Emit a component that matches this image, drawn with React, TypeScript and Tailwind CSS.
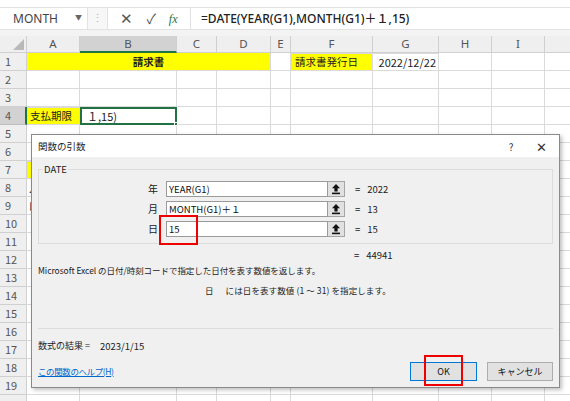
import React from "react";

const colW = ["w-[53px]", "w-[97px]", "w-[40px]", "w-[54px]", "w-[20px]", "w-[82px]", "w-[66px]", "w-[53px]", "w-[53px]", "w-[30px]"];
const colNames = ["A", "B", "C", "D", "E", "F", "G", "H", "I", ""];

function UpIcon() {
  return (
    <svg width="10" height="12" viewBox="0 0 10 12">
      <polygon points="5,1 1,5.2 3.4,5.2 3.4,8.4 6.6,8.4 6.6,5.2 9,5.2" fill="#111" />
      <rect x="1" y="9.6" width="8" height="1.6" fill="#111" />
    </svg>
  );
}

function Cell({ i, children, cls = "" }: { i: number; children?: React.ReactNode; cls?: string }) {
  return (
    <div className={`${colW[i]} h-full shrink-0 border-r border-b border-[#dadada] flex items-center overflow-hidden whitespace-nowrap ${cls}`}>
      {children}
    </div>
  );
}

function RowHdr({ n, sel = false }: { n: number; sel?: boolean }) {
  return (
    <div
      className={`w-[27px] h-full shrink-0 flex items-center pl-[5px] text-[11px] text-[#555] border-r border-b ${
        sel ? "bg-[#d2d2d2] border-r-[#217346] border-r-2 border-b-[#bdbdbd]" : "bg-[#efefef] border-[#d0d0d0]"
      }`}
    >
      {n < 20 ? n : ""}
    </div>
  );
}

function Row({ n, children }: { n: number; children?: React.ReactNode }) {
  return (
    <div className="flex h-[18px]">
      <RowHdr n={n} sel={n === 4} />
      {children}
    </div>
  );
}

function Blank({ from }: { from: number }) {
  return (
    <>
      {colW.slice(from).map((_, k) => (
        <Cell key={k} i={from + k} />
      ))}
    </>
  );
}

function ArgRow({ label, value, result }: { label: string; value: string; result: string }) {
  return (
    <div className="flex items-center h-[16px]">
      <div className="w-[119px] text-right text-[10px] text-[#222] leading-none">{label}</div>
      <div className="ml-[8px] w-[162px] h-[16px] bg-white border border-[#9a9a9a] flex items-center pl-[2px] text-[9.5px] text-[#111]">
        {value}
      </div>
      <div className="w-[17px] h-[16px] bg-[#e1e1e1] border border-[#a5a5a5] border-l-0 flex items-center justify-center">
        <UpIcon />
      </div>
      <div className="ml-[10px] text-[9.5px] text-[#222]">=</div>
      <div className="ml-[7px] text-[9.5px] text-[#222]">{result}</div>
    </div>
  );
}

export default function App() {
  return (
    <div
      className="relative w-[570px] h-[401px] overflow-hidden bg-white text-[#222]"
      style={{ fontFamily: '"Noto Sans", "Noto Sans CJK JP", sans-serif' }}
    >
      {/* formula bar */}
      <div className="h-[7px] bg-white" />
      <div className="flex h-[23px] border-y border-[#e2e2e2]">
        <div className="w-[87px] flex items-center pl-[13px] pr-[5px] bg-white">
          <span className="text-[12px] text-[#444] flex-1">MONTH</span>
          <span className="text-[7px] text-[#666]">▼</span>
        </div>
        <div className="w-[20px] flex items-center justify-center bg-[#f7f7f7] text-[#b0b0b0] text-[11px] border-l border-[#e2e2e2]">⋮</div>
        <div className="w-[84px] flex items-center justify-around px-[6px] bg-white border-x border-[#e2e2e2]">
          <span className="text-[#555] text-[15px] leading-none">✕</span>
          <span className="text-[#555] text-[14px] leading-none">✓</span>
          <span className="text-[#217346] text-[12px] italic leading-none" style={{ fontFamily: '"Liberation Serif", serif' }}>
            fx
          </span>
        </div>
        <div className="flex-1 flex items-center pl-[10px] bg-white text-[12px] font-medium text-[#222] whitespace-nowrap">
          =DATE(YEAR(G1),MONTH(G1)＋１,15)
        </div>
      </div>
      <div className="h-[6px] bg-[#f3f3f3]" />
      {/* column headers */}
      <div className="flex h-[17px] bg-[#efefef] text-[11.5px] text-[#555]">
        <div className="w-[27px] shrink-0 border-r border-b border-[#d0d0d0] relative">
          <svg className="absolute right-[2px] bottom-[2px]" width="11" height="11" viewBox="0 0 11 11">
            <polygon points="11,0 11,11 0,11" fill="#b9b9b9" />
          </svg>
        </div>
        {colNames.map((c, i) => (
          <div
            key={i}
            className={`${colW[i]} shrink-0 flex items-center justify-center border-r border-[#d0d0d0] ${
              i === 1 ? "bg-[#d2d2d2] border-b-2 border-b-[#217346]" : "border-b"
            }`}
          >
            {c}
          </div>
        ))}
      </div>
      {/* rows */}
      <div style={{ fontFamily: '"Noto Sans CJK JP", sans-serif' }} className="text-[10.5px]">
        <Row n={1}>
          <div className="w-[244px] h-full shrink-0 bg-[#ffff00] border-r border-b border-[#dadada] flex items-center justify-center font-bold">
            請求書
          </div>
          <Cell i={4} />
          <Cell i={5} cls="bg-[#ffff00] border border-[#333] pl-[3px]">請求書発行日</Cell>
          <Cell i={6} cls="border border-l-0 border-[#555] justify-end pr-[2px] text-[11px]">2022/12/22</Cell>
          <Blank from={7} />
        </Row>
        <Row n={2}>
          <Blank from={0} />
        </Row>
        <Row n={3}>
          <Blank from={0} />
        </Row>
        <Row n={4}>
          <Cell i={0} cls="bg-[#ffff00] border border-[#333] pl-[2px] text-[10.5px]">支払期限</Cell>
          <div className="w-[97px] h-full shrink-0 border-2 border-[#217346] relative flex items-center pl-[5px] text-[11px]">
            １,15)
            <div className="absolute -right-[3px] -bottom-[3px] w-[4px] h-[4px] bg-[#217346] border border-white" />
          </div>
          <Blank from={2} />
        </Row>
        {[5, 6, 7, 8, 9, 10, 11, 12, 13, 14, 15, 16, 17, 18, 19, 20].map((n) => (
          <Row key={n} n={n}>
            {n === 7 ? (
              <Cell i={0} cls="bg-[#ffff00] border border-[#333]" />
            ) : n === 8 ? (
              <Cell i={0} cls="pl-[2px]">入金</Cell>
            ) : n === 9 ? (
              <Cell i={0} cls="pl-[2px]">口座</Cell>
            ) : (
              <Cell i={0} />
            )}
            <Blank from={1} />
          </Row>
        ))}
      </div>

      {/* dialog */}
      <div
        className="absolute left-[31px] top-[134px] w-[529px] h-[254px] bg-[#f0f0f0] border border-[#8a8a8a] flex flex-col shadow-[2px_2px_4px_rgba(0,0,0,0.25)]"
        style={{ fontFamily: '"Noto Sans CJK JP", sans-serif' }}
      >
        <div className="h-[22px] bg-white flex items-center pl-[6px] text-[9.5px] text-[#222]">
          <span className="flex-1">関数の引数</span>
          <span className="w-[20px] text-center text-[10px] text-[#333]">?</span>
          <span className="ml-[14px] mr-[12px] w-[12px] text-center text-[13px] text-[#333] leading-none">✕</span>
        </div>
        <div className="flex-1 flex flex-col px-[6px]">
          <div className="relative mt-[12px] h-[75px] border border-[#dcdcdc] flex flex-col gap-[4px] pt-[11px]">
            <span className="absolute -top-[7px] left-[4px] px-[1px] bg-[#f0f0f0] text-[9.5px] leading-[12px] text-[#222]">DATE</span>
            <ArgRow label="年" value="YEAR(G1)" result="2022" />
            <ArgRow label="月" value="MONTH(G1)＋１" result="13" />
            <ArgRow label="日" value="15" result="15" />
          </div>
          <div className="mt-[4px] h-[14px] flex items-center text-[9.5px]">
            <span className="ml-[316px]">=</span>
            <span className="ml-[7px]">44941</span>
          </div>
          <div className="mt-[1px] h-[14px] flex items-center text-[8.5px] tracking-[-0.05px] whitespace-nowrap">
            Microsoft Excel の日付/時刻コードで指定した日付を表す数値を返します。
          </div>
          <div className="mt-[6px] h-[14px] flex items-center text-[8.5px] tracking-[0.1px] whitespace-nowrap pl-[167px]">
            <span>日</span>
            <span className="ml-[12px]">には日を表す数値 (1 ～ 31) を指定します。</span>
          </div>
          <div className="mt-[31px] border-t border-[#dcdcdc]" />
          <div className="mt-[10px] h-[14px] flex items-center text-[9px] whitespace-nowrap">
            数式の結果 =<span className="ml-[10px] text-[9.5px]">2023/1/15</span>
          </div>
          <div className="mt-[9px] h-[19px] flex items-center">
            <span className="flex-1 text-[8.5px] text-[#0066cc] underline tracking-[-0.4px]">この関数のヘルプ(H)</span>
            <div className="w-[67px] h-[19px] bg-[#e1e1e1] border border-[#0078d7] flex items-center justify-center text-[9px] text-[#111]">
              OK
            </div>
            <div className="ml-[10px] w-[66px] h-[19px] bg-[#e1e1e1] border border-[#adadad] flex items-center justify-center text-[9px] text-[#111]">
              キャンセル
            </div>
          </div>
        </div>
      </div>

      {/* red highlight boxes */}
      <div className="absolute left-[159px] top-[215px] w-[39px] h-[30px] border-2 border-[#ee0000]" />
      <div className="absolute left-[424px] top-[355px] w-[39px] h-[31px] border-2 border-[#ee0000]" />
    </div>
  );
}
